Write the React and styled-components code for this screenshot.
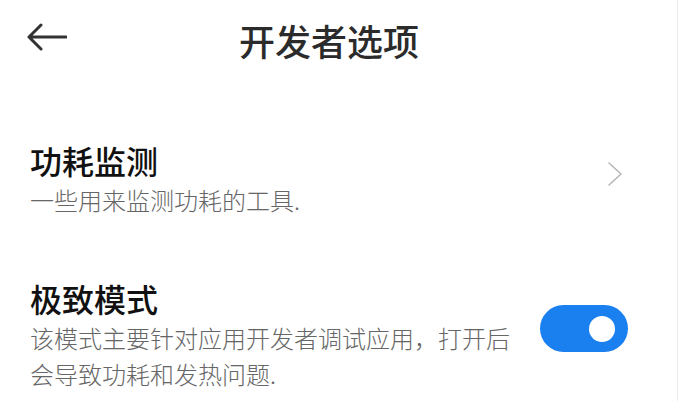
import React, { useState } from 'react';
import styled, { createGlobalStyle } from 'styled-components';

const GlobalStyle = createGlobalStyle`
  html, body {
    margin: 0;
    padding: 0;
    background: #ffffff;
  }
  body {
    font-family: "Noto Sans CJK SC", "Noto Sans", sans-serif;
  }
`;

const Page = styled.div`
  width: 677px;
  height: 401px;
  border-right: 1px solid #ececec;
  background: #ffffff;
  overflow: hidden;
`;

const Header = styled.div`
  height: 80px;
  display: flex;
  align-items: center;
  padding-left: 27px;
`;

const BackButton = styled.button`
  border: none;
  background: none;
  padding: 0;
  width: 40px;
  height: 28px;
  display: flex;
  align-items: center;
  margin-top: -6px;
  cursor: pointer;
`;

const Title = styled.h1`
  margin: 0 0 0 172px;
  font-size: 36px;
  font-weight: 500;
  color: #2b2b2b;
  line-height: 1;
`;

const List = styled.div`
  display: flex;
  flex-direction: column;
  gap: 61px;
  padding-top: 61px;
`;

const Row = styled.div`
  display: flex;
  align-items: center;
  padding: 0 49px 0 30px;
`;

const Texts = styled.div`
  flex: 1;
  display: flex;
  flex-direction: column;
  gap: 3px;
`;

const ItemTitle = styled.div`
  font-size: 32px;
  font-weight: 500;
  color: #111111;
  line-height: 38px;
`;

const ItemDesc = styled.div`
  font-size: 24px;
  font-weight: 300;
  color: #666666;
  line-height: 36px;
  max-width: ${p => p.$max || 500}px;
`;

const Side = styled.div`
  width: 88px;
  display: flex;
  justify-content: flex-end;
  margin-bottom: ${p => p.$lift}px;
  padding-right: ${p => p.$inset || 0}px;
`;

const Toggle = styled.button`
  width: 88px;
  height: 47px;
  border: none;
  border-radius: 24px;
  background: ${p => (p.$on ? '#1a80f0' : '#d9d9d9')};
  padding: 0;
  display: flex;
  align-items: center;
  justify-content: ${p => (p.$on ? 'flex-end' : 'flex-start')};
  cursor: pointer;
`;

const Knob = styled.span`
  width: 26px;
  height: 26px;
  border-radius: 50%;
  background: #ffffff;
  margin: 0 13px;
`;

export default function App() {
  const [extreme, setExtreme] = useState(true);

  return (
    <>
      <GlobalStyle />
      <Page>
        <Header>
          <BackButton aria-label="back">
            <svg width="40" height="28" viewBox="0 0 40 28">
              <path d="M14 2 L2 14 L14 26 M2 14 H39" fill="none" stroke="#333" strokeWidth="3" strokeLinecap="round" strokeLinejoin="round" />
            </svg>
          </BackButton>
          <Title>开发者选项</Title>
        </Header>
        <List>
          <Row>
            <Texts>
              <ItemTitle>功耗监测</ItemTitle>
              <ItemDesc>一些用来监测功耗的工具.</ItemDesc>
            </Texts>
            <Side $lift={12} $inset={5}>
              <svg width="16" height="26" viewBox="0 0 16 26">
                <path d="M2 2 L14 13 L2 24" fill="none" stroke="#b8b8b8" strokeWidth="1.6" strokeLinecap="round" strokeLinejoin="round" />
              </svg>
            </Side>
          </Row>
          <Row>
            <Texts>
              <ItemTitle>极致模式</ItemTitle>
              <ItemDesc $max={490}>该模式主要针对应用开发者调试应用，打开后会导致功耗和发热问题.</ItemDesc>
            </Texts>
            <Side $lift={14}>
              <Toggle $on={extreme} onClick={() => setExtreme(!extreme)} aria-label="toggle">
                <Knob />
              </Toggle>
            </Side>
          </Row>
        </List>
      </Page>
    </>
  );
}
